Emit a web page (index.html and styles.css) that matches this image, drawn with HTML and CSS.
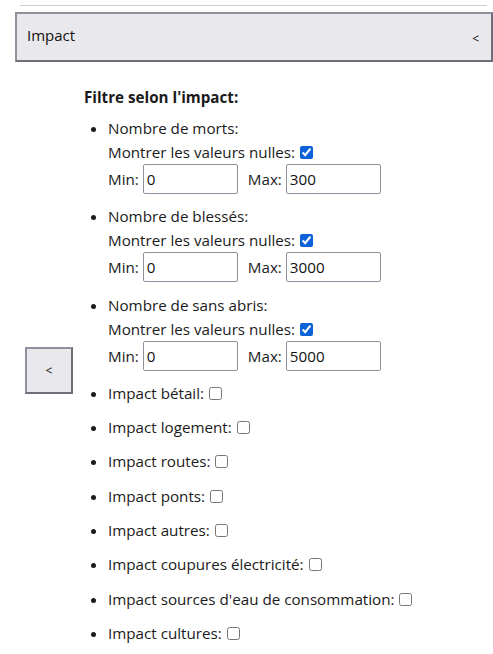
FILE: index.html
```html
<!DOCTYPE html>
<html lang="fr">
<head>
<meta charset="utf-8">
<link rel="stylesheet" href="styles.css">
</head>
<body>
<hr class="rule">
<button class="section-toggle" type="button"><span class="title">Impact</span><span class="chev">&lt;</span></button>
<div class="panel">
  <div class="side">
    <button class="side-btn" type="button">&lt;</button>
  </div>
  <div class="content">
    <div class="heading">Filtre selon l'impact:</div>
    <ul class="list">
      <li class="item range">
        <div class="line">Nombre de morts:</div>
        <div class="line">Montrer les valeurs nulles: <input type="checkbox" checked></div>
        <div class="inputs">
          <label>Min: <input class="num" type="text" value="0"></label>
          <label>Max: <input class="num" type="text" value="300"></label>
        </div>
      </li>
      <li class="item range">
        <div class="line">Nombre de blessés:</div>
        <div class="line">Montrer les valeurs nulles: <input type="checkbox" checked></div>
        <div class="inputs">
          <label>Min: <input class="num" type="text" value="0"></label>
          <label>Max: <input class="num" type="text" value="3000"></label>
        </div>
      </li>
      <li class="item range">
        <div class="line">Nombre de sans abris:</div>
        <div class="line">Montrer les valeurs nulles: <input type="checkbox" checked></div>
        <div class="inputs">
          <label>Min: <input class="num" type="text" value="0"></label>
          <label>Max: <input class="num" type="text" value="5000"></label>
        </div>
      </li>
      <li class="item"><div class="line">Impact bétail: <input type="checkbox"></div></li>
      <li class="item"><div class="line">Impact logement: <input type="checkbox"></div></li>
      <li class="item"><div class="line">Impact routes: <input type="checkbox"></div></li>
      <li class="item"><div class="line">Impact ponts: <input type="checkbox"></div></li>
      <li class="item"><div class="line">Impact autres: <input type="checkbox"></div></li>
      <li class="item"><div class="line">Impact coupures électricité: <input type="checkbox"></div></li>
      <li class="item"><div class="line">Impact sources d'eau de consommation: <input type="checkbox"></div></li>
      <li class="item"><div class="line">Impact cultures: <input type="checkbox"></div></li>
    </ul>
  </div>
</div>
</body>
</html>
```
FILE: styles.css
```css
html, body {
  margin: 0;
  padding: 0;
  background: #ffffff;
  color: #1b1b1b;
  font-family: "Open Sans", "Noto Sans", sans-serif;
  font-size: 15.2px;
  overflow: hidden;
}
.rule {
  margin: 5px 6px 6px 20px;
  border: 0;
  border-top: 1px solid #cfcfcf;
  height: 0;
}
.section-toggle {
  display: flex;
  justify-content: space-between;
  align-items: center;
  box-sizing: border-box;
  width: 478px;
  height: 50px;
  margin: 0 0 0 15px;
  padding: 0 12px 0 10px;
  background: #e9e9ed;
  border: 2px solid;
  border-color: #8f8f9d #6f6f7a #6f6f7a #8f8f9d;
  font-family: inherit;
  font-size: 15px;
  color: #111;
  text-align: left;
}
.section-toggle .title {
  margin-bottom: 5px;
}
.section-toggle .chev {
  font-size: 12px;
  margin-top: 3px;
}
.panel {
  display: flex;
  margin-top: 24px;
}
.side {
  width: 84px;
  flex: none;
  padding-top: 261px;
  padding-left: 25px;
  box-sizing: border-box;
}
.side-btn {
  width: 48px;
  height: 47px;
  background: #e9e9ed;
  border: 2px solid;
  border-color: #8f8f9d #6f6f7a #6f6f7a #8f8f9d;
  font-family: inherit;
  font-size: 12px;
  color: #111;
  padding: 0;
}
.content {
  flex: 1;
}
.heading {
  font-weight: bold;
  line-height: 22px;
}
.list {
  margin: 8px 0 0 0;
  padding-left: 24px;
}
.item {
  margin-bottom: 10.3px;
  line-height: 24px;
}
.inputs {
  display: flex;
  gap: 10px;
  align-items: center;
  height: 30px;
}
.inputs label {
  display: flex;
  align-items: center;
  gap: 4px;
}
.num {
  box-sizing: border-box;
  width: 95px;
  height: 30px;
  border: 1px solid #8f8f9d;
  border-radius: 2px;
  padding: 0 3px;
  font-family: inherit;
  font-size: 15.2px;
  color: #111;
}
input[type="checkbox"] {
  width: 13px;
  height: 13px;
  margin: 0 0 0 1px;
  vertical-align: -1px;
  accent-color: #0b62d6;
}
```
